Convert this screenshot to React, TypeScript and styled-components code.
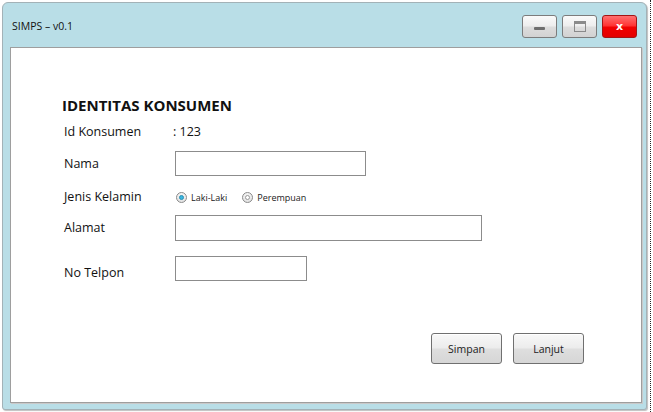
import React from "react";
import styled, { createGlobalStyle } from "styled-components";

const Global = createGlobalStyle`
  html, body { margin: 0; padding: 0; background: #ffffff; }
  body { font-family: "Open Sans", "Noto Sans", sans-serif; color: #111; }
  * { box-sizing: border-box; }
`;

const Page = styled.div`
  width: 651px;
  height: 412px;
  padding: 2px 3px 2px 2px;
  border-right: 1px dotted #222;
  display: flex;
`;

const Frame = styled.div`
  flex: 1;
  display: flex;
  flex-direction: column;
  background: #b9dee7;
  border: 1px solid #a3b2b7;
  border-radius: 6px 6px 3px 3px;
  padding: 0 4px 6px 7px;
  box-shadow: 1px 1px 1px rgba(0, 0, 0, 0.25);
`;

const TitleBar = styled.div`
  height: 44px;
  display: flex;
  align-items: center;
  justify-content: space-between;
  padding: 0 5px 0 2px;
`;

const Title = styled.div`
  font-size: 10.5px;
  color: #111;
  padding-top: 1px;
`;

const Controls = styled.div`
  display: flex;
  gap: 5px;
  padding-top: 2px;
`;

const CtrlButton = styled.div<{ $danger?: boolean }>`
  width: 35px;
  height: 23px;
  border-radius: 3px;
  border: 1px solid ${(p) => (p.$danger ? "#a31515" : "#7c7c7c")};
  background: ${(p) =>
    p.$danger
      ? "linear-gradient(#ff7070 0%, #ff3535 45%, #f00000 55%, #e40000 100%)"
      : "linear-gradient(#fafafa 0%, #eeeeee 45%, #dcdcdc 55%, #d2d2d2 100%)"};
  display: flex;
  align-items: center;
  justify-content: center;
  color: #fff;
  font-family: "DejaVu Sans", sans-serif;
  font-weight: bold;
  font-size: 11px;
  line-height: 1;
`;

const MinBar = styled.div`
  width: 11px;
  height: 3px;
  background: #6e6e6e;
  border-radius: 1px;
  margin-top: 4px;
`;

const MaxBox = styled.div`
  width: 12px;
  height: 11px;
  border: 1px solid #8a8a8a;
  border-top-width: 3px;
`;

const Panel = styled.div`
  flex: 1;
  background: #ffffff;
  border: 1px solid #9e9e9e;
  box-shadow: 1px 1px 0 #c9c9c9;
  display: flex;
  flex-direction: column;
  padding: 47px 57px 0 53px;
`;

const Heading = styled.h1`
  margin: 0 0 0 -2px;
  font-size: 15px;
  line-height: 20px;
  font-weight: 700;
  color: #111;
`;

const Row = styled.div<{ $top: number; $h: number }>`
  display: flex;
  align-items: center;
  margin-top: ${(p) => p.$top}px;
  height: ${(p) => p.$h}px;
`;

const Label = styled.div<{ $drop?: number }>`
  width: 111px;
  font-size: 12.5px;
  line-height: 20px;
  margin-top: ${(p) => p.$drop ?? 0}px;
`;

const Value = styled.div`
  font-size: 12.5px;
  line-height: 20px;
  margin-left: -2px;
`;

const TextBox = styled.input<{ $w: number }>`
  width: ${(p) => p.$w}px;
  height: 100%;
  border: 1px solid #8c8c8c;
  border-radius: 0;
  background: #fff;
  padding: 0 4px;
  font: inherit;
  font-size: 12px;
  outline: none;
`;

const RadioGroup = styled.div`
  display: flex;
  align-items: center;
  gap: 15px;
  margin-left: 1px;
`;

const RadioItem = styled.label`
  display: flex;
  align-items: center;
  gap: 4px;
  font-size: 9px;
  color: #222;
`;

const RadioCircle = styled.span<{ $checked?: boolean }>`
  width: 11px;
  height: 11px;
  border-radius: 50%;
  border: 1px solid #8a8a8a;
  background: linear-gradient(#f4f4f4, #e2e2e2);
  display: flex;
  align-items: center;
  justify-content: center;
  &::after {
    content: "";
    width: 5px;
    height: 5px;
    border-radius: 50%;
    box-sizing: border-box;
    background: ${(p) => (p.$checked ? "#38b6e0" : "#ffffff")};
    border: 1px solid ${(p) => (p.$checked ? "#2a8fb3" : "#9a9a9a")};
  }
`;

const Actions = styled.div`
  margin-top: 52px;
  display: flex;
  justify-content: flex-end;
  gap: 11px;
`;

const ActionButton = styled.button`
  width: 71px;
  height: 31px;
  border: 1px solid #707070;
  border-radius: 3px;
  background: linear-gradient(#f8f8f8 0%, #ececec 48%, #dedede 52%, #d6d6d6 100%);
  font-family: "Open Sans", "Noto Sans", sans-serif;
  font-size: 10.5px;
  color: #222;
  padding: 0;
  box-shadow: inset 0 1px 0 #ffffff;
`;

export default function App() {
  return (
    <>
      <Global />
      <Page>
        <Frame>
          <TitleBar>
            <Title>SIMPS – v0.1</Title>
            <Controls>
              <CtrlButton>
                <MinBar />
              </CtrlButton>
              <CtrlButton>
                <MaxBox />
              </CtrlButton>
              <CtrlButton $danger>x</CtrlButton>
            </Controls>
          </TitleBar>
          <Panel>
            <Heading>IDENTITAS KONSUMEN</Heading>
            <Row $top={7} $h={20}>
              <Label>Id Konsumen</Label>
              <Value>: 123</Value>
            </Row>
            <Row $top={9} $h={25}>
              <Label>Nama</Label>
              <TextBox $w={191} />
            </Row>
            <Row $top={11} $h={20}>
              <Label>Jenis Kelamin</Label>
              <RadioGroup>
                <RadioItem>
                  <RadioCircle $checked />
                  Laki-Laki
                </RadioItem>
                <RadioItem>
                  <RadioCircle />
                  Perempuan
                </RadioItem>
              </RadioGroup>
            </Row>
            <Row $top={8} $h={26}>
              <Label>Alamat</Label>
              <TextBox $w={307} />
            </Row>
            <Row $top={15} $h={25}>
              <Label $drop={8}>No Telpon</Label>
              <TextBox $w={132} />
            </Row>
            <Actions>
              <ActionButton>Simpan</ActionButton>
              <ActionButton>Lanjut</ActionButton>
            </Actions>
          </Panel>
        </Frame>
      </Page>
    </>
  );
}
